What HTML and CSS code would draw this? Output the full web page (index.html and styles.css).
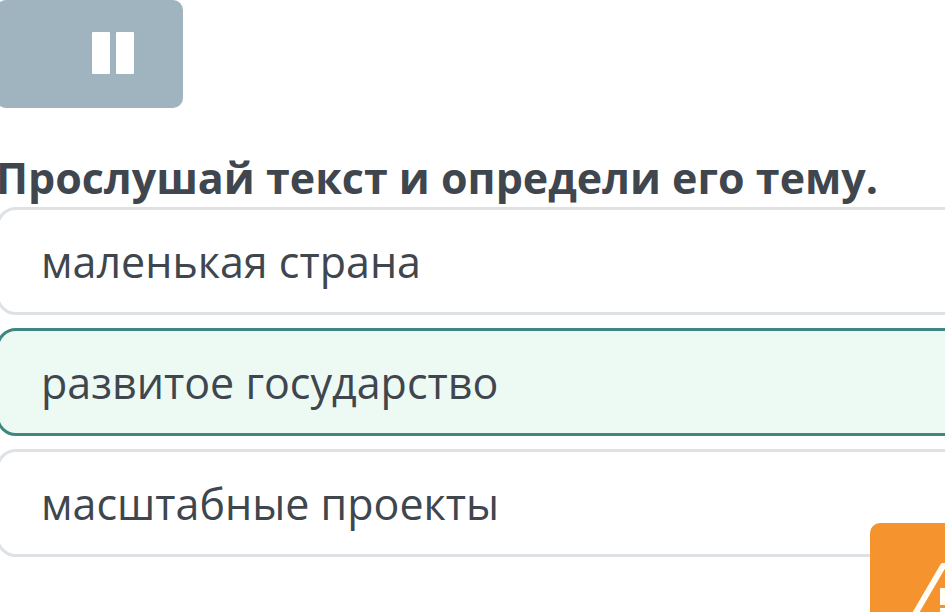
FILE: index.html
```html
<!DOCTYPE html>
<html lang="ru">
<head>
<meta charset="utf-8">
<meta name="viewport" content="width=device-width, initial-scale=1">
<title>Прослушай текст</title>
<link rel="stylesheet" href="styles.css">
</head>
<body>
<main class="task">
  <button class="player" type="button" aria-label="Пауза">
    <svg class="player-icon" viewBox="0 0 42 42" aria-hidden="true">
      <rect x="0" y="0" width="18" height="42" rx="1"/>
      <rect x="24" y="0" width="18" height="42" rx="1"/>
    </svg>
  </button>
  <form>
    <fieldset class="question">
      <legend class="title">Прослушай текст и определи его тему.</legend>
      <div class="options">
        <label class="option"><input class="option-input" type="radio" name="topic">маленькая страна</label>
        <label class="option"><input class="option-input" type="radio" name="topic" checked>развитое государство</label>
        <label class="option"><input class="option-input" type="radio" name="topic">масштабные проекты</label>
      </div>
    </fieldset>
  </form>
</main>
<button class="report" type="button" aria-label="Сообщить об ошибке">
  <svg class="report-icon" viewBox="0 0 80 72" aria-hidden="true">
    <path class="report-outline" d="M38 7H42L77 67H3Z"/>
    <path class="report-mark" d="M35 29h10v17h-10zM35 49h10v9h-10z"/>
  </svg>
</button>
</body>
</html>
```
FILE: styles.css
```css
* {
  box-sizing: border-box;
}

body {
  margin: 0;
  overflow: hidden;
  background: #fff;
  color: #40464e;
  font-family: "Open Sans", "Noto Sans", sans-serif;
  font-size: 43px;
  line-height: 60px;
}

/* The content column runs past both sides of the window. */
.task {
  margin: 0 -24px 0 -4px;
}

.player {
  display: flex;
  align-items: center;
  justify-content: flex-end;
  width: 187px;
  height: 108px;
  margin: 0 0 42px;
  padding: 0 49px 2px;
  border: 0;
  border-radius: 10px;
  background: #a0b4c0;
}

.player-icon {
  flex: none;
  width: 42px;
  height: 42px;
  fill: #fff;
}

.question {
  min-width: 0;
  margin: 0;
  padding: 0;
  border: 0;
}

.title {
  padding: 0 0 1px;
  font-weight: 700;
  line-height: 56px;
  white-space: nowrap;
}

.options {
  display: grid;
  gap: 13px;
}

.option {
  display: block;
  padding: 22px 42px 20px;
  border: 3px solid #dfe2e4;
  border-radius: 20px;
  background: #fff;
}

.option:has(:checked) {
  border-color: #3f8782;
  background: #edfaf4;
}

.option-input {
  position: absolute;
  opacity: 0;
}

.report {
  position: fixed;
  right: -75px;
  bottom: -55px;
  padding: 36px 35px;
  border: 0;
  border-radius: 10px;
  background: #f5932f;
}

.report-icon {
  display: block;
  width: 80px;
  height: 72px;
}

.report-outline {
  fill: none;
  stroke: #fffdf4;
  stroke-width: 6;
  stroke-linejoin: round;
}

.report-mark {
  fill: #fffdf4;
}
```
